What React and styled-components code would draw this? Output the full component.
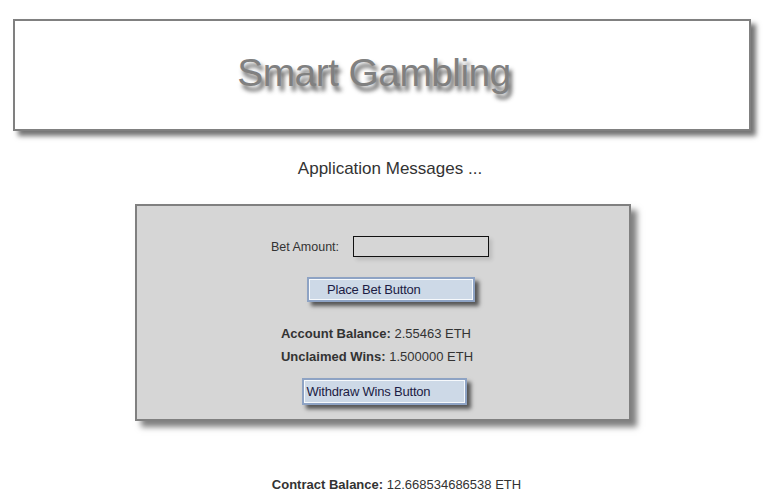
import React from "react";
import styled, { createGlobalStyle } from "styled-components";

const GlobalStyle = createGlobalStyle`
  body {
    margin: 0;
    background: #fff;
    font-family: "Liberation Sans", Arial, sans-serif;
    color: #333;
  }
`;

const Page = styled.div`
  display: flex;
  flex-direction: column;
  align-items: center;
  padding: 19px 0 0;
`;

const Header = styled.header`
  box-sizing: border-box;
  width: 738px;
  height: 112px;
  margin-left: -4px;
  border: 2px solid #808080;
  box-shadow: 5px 5px 5px rgba(0, 0, 0, 0.55);
  display: flex;
  align-items: center;
  justify-content: center;
  padding-right: 16px;
  padding-bottom: 4px;
`;

const Title = styled.h1`
  margin: 0;
  font-size: 39px;
  font-weight: normal;
  letter-spacing: -0.6px;
  color: #808080;
  text-shadow: 3px 5px 4px rgba(30, 30, 30, 0.75);
`;

const Messages = styled.p`
  margin: 28px 0 0 12px;
  font-size: 17px;
  line-height: 20px;
  color: #333;
`;

const Panel = styled.section`
  box-sizing: border-box;
  width: 496px;
  margin-top: 25px;
  margin-left: -2px;
  padding: 30px 0 14px;
  background: #d6d6d6;
  border: 2px solid #808080;
  box-shadow: 6px 6px 6px rgba(0, 0, 0, 0.5);
  display: flex;
  flex-direction: column;
  align-items: center;
`;

const BetRow = styled.div`
  display: flex;
  align-items: center;
  gap: 14px;
  margin-left: -6px;
`;

const Label = styled.label`
  font-size: 12.5px;
  color: #333;
`;

const AmountInput = styled.input`
  box-sizing: border-box;
  width: 136px;
  height: 21px;
  border: 1px solid #111;
  background: transparent;
  box-shadow: 3px 3px 4px rgba(0, 0, 0, 0.12);
  outline: none;
  padding: 0 4px;
  font: inherit;
`;

const Button = styled.button`
  box-sizing: border-box;
  width: ${p => p.width}px;
  height: ${p => p.height}px;
  margin-top: ${p => p.top}px;
  margin-left: ${p => p.shift || 0}px;
  padding: 0 0 0 ${p => p.indent}px;
  text-align: left;
  background: #cdd9e7;
  border: 2px solid #8ea3c4;
  box-shadow: inset 0 0 0 1px #f6f9fc, 4px 4px 4px rgba(0, 0, 0, 0.6);
  font-family: "Liberation Sans", Arial, sans-serif;
  font-size: 13px;
  letter-spacing: -0.2px;
  color: #1c1c44;
  cursor: pointer;
`;

const Stat = styled.p`
  margin: ${p => p.top}px 0 0 ${p => p.shift || 0}px;
  font-size: 13px;
  line-height: 16px;
  color: #333;

  b {
    font-weight: bold;
  }
`;

const Footer = styled(Stat)`
  margin-top: 56px;
  margin-left: 25px;
`;

export default function App() {
  return (
    <>
      <GlobalStyle />
      <Page>
        <Header>
          <Title>Smart Gambling</Title>
        </Header>
        <Messages>Application Messages ...</Messages>
        <Panel>
          <BetRow>
            <Label htmlFor="bet">Bet Amount:</Label>
            <AmountInput id="bet" type="text" />
          </BetRow>
          <Button width={168} height={25} top={20} shift={16} indent={18}>
            Place Bet Button
          </Button>
          <Stat top={24} shift={-14}>
            <b>Account Balance:</b> 2.55463 ETH
          </Stat>
          <Stat top={7} shift={-12}>
            <b>Unclaimed Wins:</b> 1.500000 ETH
          </Stat>
          <Button width={165} height={27} top={13} shift={2} indent={3}>
            Withdraw Wins Button
          </Button>
        </Panel>
        <Footer>
          <b>Contract Balance:</b> 12.668534686538 ETH
        </Footer>
      </Page>
    </>
  );
}
